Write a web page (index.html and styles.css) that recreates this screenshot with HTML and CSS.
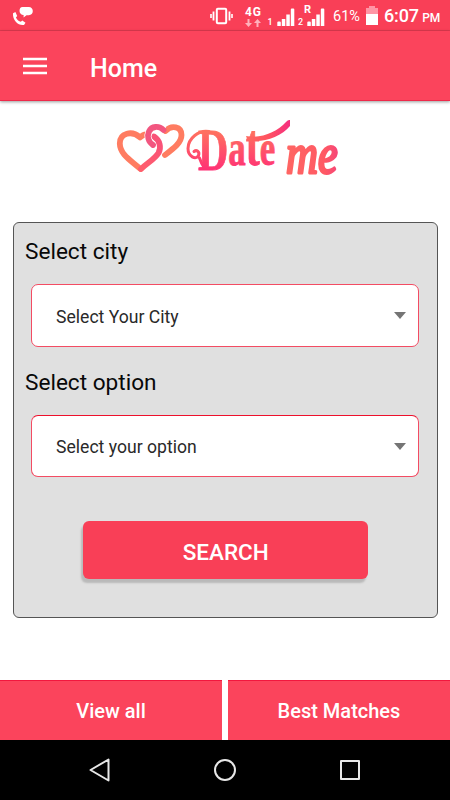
FILE: index.html
```html
<!DOCTYPE html>
<html lang="en">
<head>
<meta charset="utf-8">
<meta name="viewport" content="width=device-width, initial-scale=1">
<title>Date me</title>
<link rel="stylesheet" href="styles.css">
</head>
<body>
<div class="status">
  <svg class="call" width="22" height="20" viewBox="0 0 22 20" fill="#fff">
    <path d="M2 7.300 4.400 6l1.800 4-1.300 1.400c1.400 2.700 3 3.600 4.900 4.300l1.500-1.300 3.200 2.300-1.500 2.200C8 20 1.400 15 2 7.300Z"/>
    <path d="M11.500 1h6.300c2.500 0 4 1.700 4 4s-1.500 4.200-4 4.200h-2.300l-2.900 2.400v-2.500C10.200 8.900 8.500 7.400 8.500 5s1-4 3-4Z"/>
  </svg>
  <svg class="vibrate" width="23" height="18" viewBox="0 0 23 18" fill="none" stroke="#fff">
    <path d="M1 7v4M22 7v4" stroke-width="1.600"/><path d="M3.500 4.500v9M19.500 4.500v9" stroke-width="1.800"/><rect x="6.800" y="1.800" width="9.400" height="14.400" rx="1" stroke-width="2"/>
  </svg>
  <div class="network">
    <span>4G</span>
    <svg width="16" height="8" viewBox="0 0 16 8" fill="#ffb1bc"><path d="M2.500 0h2v4H7L3.500 8 0 4h2.500ZM11.500 8h2V4H16l-3.500-4L9 4h2.500Z"/></svg>
  </div>
  <div class="signal first">
    <span class="sim">1</span>
    <svg width="18" height="18" viewBox="0 0 18 18" fill="#fff"><path d="M.3 14.500q0-1 1-1h1.500q1 0 1 1V18H.3ZM4.800 11h3.500v7H4.800ZM9.300 6.500h3.500V18H9.300ZM13.800 1.500q0-1 1-1h1.500q1 0 1 1V18h-3.500Z"/></svg>
  </div>
  <div class="signal second">
    <span class="sim">2</span><span class="roam">R</span>
    <svg width="18" height="18" viewBox="0 0 18 18" fill="#fff"><path d="M.3 14.500q0-1 1-1h1.500q1 0 1 1V18H.3ZM4.800 11h3.500v7H4.800ZM9.300 6.500h3.500V18H9.300ZM13.800 1.500q0-1 1-1h1.500q1 0 1 1V18h-3.500Z"/></svg>
  </div>
  <span class="percent">61%</span>
  <svg class="battery" width="12" height="19" viewBox="0 0 12 19"><path d="M3 0h6v2h3v6H0V2h3Z" fill="#ff95a5"/><path d="M0 8h12v11H0Z" fill="#fff"/></svg>
  <span class="time">6:07 <small>PM</small></span>
</div>
<header class="appbar">
  <svg class="menu" width="24" height="18" viewBox="0 0 24 18" stroke="#fff" stroke-width="2.500"><path d="M0 2h24M0 9h24M0 16h24"/></svg>
  <h1>Home</h1>
</header>
<main>
  <svg class="logo" width="240" height="80" viewBox="110 110 240 80" role="img" aria-label="Date me">
    <defs>
      <linearGradient id="word" gradientUnits="userSpaceOnUse" x1="0" y1="128" x2="0" y2="171"><stop offset=".1" stop-color="#ff705f"/><stop offset="1" stop-color="#ff3075"/></linearGradient>
      <linearGradient id="date" gradientUnits="userSpaceOnUse" x1="0" y1="-42" x2="0" y2="1"><stop offset=".1" stop-color="#ff705f"/><stop offset="1" stop-color="#ff3075"/></linearGradient>
      <linearGradient id="me" x1="0" y1="0" x2="1" y2="0"><stop offset="0" stop-color="#ff6663"/><stop offset=".75" stop-color="#ff5964"/><stop offset="1" stop-color="#f64678"/></linearGradient>
      <linearGradient id="swash" x1="0" y1="0" x2="1" y2="0"><stop offset="0" stop-color="#ff6a60"/><stop offset=".5" stop-color="#ff5260"/><stop offset="1" stop-color="#f52f80"/></linearGradient>
      <linearGradient id="strand" gradientUnits="userSpaceOnUse" x1="140" y1="170" x2="158" y2="142"><stop offset="0" stop-color="#ff5e6c"/><stop offset="1" stop-color="#f95278"/></linearGradient>
    </defs>
    <g fill="none" stroke-width="5.800" stroke-linecap="round" stroke-linejoin="round">
      <path d="M140.500 169C132 161 120 155 119.800 143.500 119.700 133 132 130 140 137.500q3-3 6-3" stroke="#ff7c61"/>
      <path d="M165 155C173 149 181.500 143 181.500 135c0-8.500-10-10.500-16-4" stroke="#ff7c61"/>
      <path d="M154 136.500c6 4 7.500 11 4.500 16.500-4 6.500-11.500 10-17.500 16" stroke="url(#strand)"/>
      <path d="M153 145c-5-3.500-6-9-4-13.500 2.500-5.500 10-6 14.500-1.500" stroke="#fff" stroke-width="7.200" stroke-linecap="butt"/>
      <path d="M153 145c-5-3.500-6-9-4-13.500 2.500-5.500 10-6 14.500-1.500" stroke="#f25680"/>
    </g>
    <g class="lettering">
      <text class="date" transform="translate(198 170) scale(.7 1)" fill="url(#date)" stroke="url(#date)"><tspan class="cap">D</tspan><tspan class="small-letter" dy="-5">a</tspan><tspan class="tall">t</tspan><tspan class="small-letter">e</tspan></text>
      <path class="curl" d="M209 131.500c-10-2-21 7-21 17 0 8 8 12 10.500 7 1.500-4-2-6-4.500-4M199.500 158q2 6 5 10" stroke="url(#word)"/>
      <path d="M246 136c15 3 31-4 40-14q2-2.500 4-2v6c-8 10-24 16-37 15q-6 0-7-5Z" fill="url(#swash)"/>
      <text class="me" transform="translate(286 172.500) scale(.79 1)" fill="url(#me)" stroke="url(#me)">me</text>
    </g>
  </svg>
  <section class="panel">
    <h2>Select city</h2>
    <div class="select city"><span>Select Your City</span><i></i></div>
    <h2 class="option-title">Select option</h2>
    <div class="select option"><span>Select your option</span><i></i></div>
    <button class="search">SEARCH</button>
  </section>
</main>
<div class="actions"><button>View all</button><button>Best Matches</button></div>
<nav>
  <svg width="22" height="26" viewBox="0 0 22 26"><path d="M19.500 2.500v21L1.500 13Z"/></svg>
  <svg width="24" height="24" viewBox="0 0 24 24"><circle cx="12" cy="12" r="10"/></svg>
  <svg width="22" height="22" viewBox="0 0 22 22"><path d="M2 2h18v18H2Z"/></svg>
</nav>
</body>
</html>
```

FILE: styles.css
```css
* { box-sizing: border-box; }
body { margin: 0; width: 450px; height: 800px; display: flex; flex-direction: column; background: #fff; font-family: Roboto, sans-serif; overflow: hidden; }
h1, h2 { margin: 0; }
svg { display: block; flex: none; }
.status { height: 31px; flex: none; display: flex; align-items: flex-start; background: #f93f57; border-bottom: 1px solid #df3a50; color: #fff; white-space: nowrap; }
.call { margin: 6px 0 0 11px; }
.vibrate { margin: 7px 0 0 177px; }
.network { width: 18px; margin: 7px 0 0 12px; font-size: 12px; line-height: 11px; font-weight: 700; letter-spacing: .8px; }
.network svg { margin-top: 1px; }
.signal { position: relative; display: flex; align-items: flex-end; height: 18px; margin-top: 8px; font-weight: 500; }
.sim { width: 9px; font-size: 9px; line-height: 8px; }
.first { margin-left: 4.500px; }
.second { margin-left: 3.500px; }
.roam { position: absolute; left: 6px; top: -3px; font-size: 11px; line-height: 10px; font-weight: 700; }
.percent { width: 27px; margin: 7px 0 0 8px; font-size: 14.500px; line-height: 19px; }
.battery { margin: 6px 0 0 6px; }
.time { margin: 5px 0 0 6px; font-size: 18px; line-height: 22px; font-weight: 500; letter-spacing: -.15px; }
.time small { font-size: 12px; margin-left: -1px; }
.appbar { height: 70px; flex: none; display: flex; align-items: center; padding-left: 23px; background: #fb445c; border-bottom: 1px solid #ef294a; box-shadow: 0 1px 3px #0006; color: #fff; }
.menu { margin-top: 1px; }
h1 { margin: 6px 0 0 43px; font-size: 25px; line-height: 30px; font-weight: 500; }
main { height: 579px; flex: none; padding: 9px 12px 0; }
.logo { margin: 0 0 32px 98px; }
.lettering { font-family: "Liberation Serif", serif; font-weight: 700; }
.date { stroke-width: .8px; }
.cap { font-size: 60px; }
.small-letter { font-size: 50px; }
.tall { font-size: 60px; }
.curl { fill: none; stroke-width: 3px; stroke-linecap: round; }
.me { font-size: 56px; font-style: italic; font-weight: 400; stroke-width: 3px; stroke-linejoin: round; }
.panel { width: 425px; height: 396px; margin-left: .5px; padding: 13px 17.500px 0 11.500px; border: 1px solid #555; border-radius: 6px; background: #e0e0e0; }
h2 { height: 30px; padding-top: 1px; font-size: 22.600px; line-height: 30px; font-weight: 400; color: #080808; }
.select { height: 63px; display: flex; align-items: center; justify-content: space-between; margin: 18px 0 0 6px; padding: 2px 12px 0 24px; border: 1px solid #f34c63; border-radius: 7px; background: #fff; color: #292929; font-size: 17.600px; }
.select i { border: 6px solid transparent; border-top: 7px solid #757575; border-bottom: 0; margin-top: -2px; }
.option-title { margin-top: 20px; }
.select.option { height: 62px; margin-top: 18px; border-top-color: #ed102c; }
button { border: 0; padding: 0; font-family: inherit; color: #fff; }
.search { display: block; width: 285px; height: 58px; margin: 44px 0 0 58.200px; padding-top: 4px; border-radius: 6px; background: #f93f57; font-size: 22.500px; font-weight: 500; box-shadow: -2px 4px 2px #b9b9b9; }
.actions { height: 60px; flex: none; display: grid; grid-template-columns: 1fr 1fr; gap: 6px; }
.actions button { padding: 1px 0 0; border-top: 1px solid #f2173e; background: #fb445c; font-size: 20px; font-weight: 500; }
nav { height: 60px; flex: none; display: flex; align-items: center; justify-content: space-between; padding: 0 89px; background: #000; }
nav svg { fill: none; stroke: #e7e7e7; stroke-width: 2; stroke-linejoin: round; }
```
